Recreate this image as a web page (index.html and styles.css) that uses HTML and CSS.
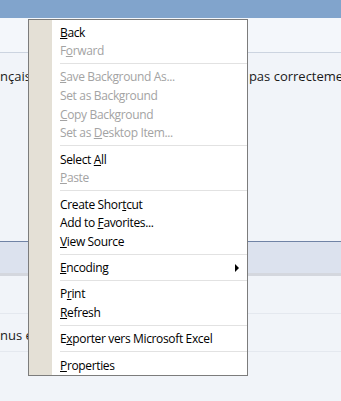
FILE: index.html
```html
<!DOCTYPE html>
<html lang="fr">
<head>
  <meta charset="UTF-8" />
  <meta name="viewport" content="width=device-width, initial-scale=1.0"/>
  <title>Menu contextuel</title>
  <link rel="stylesheet" href="styles.css">
</head>
<body>
  <div class="page">
    <div class="topbar"></div>
    <div class="toolbar"></div>
    <div class="notice">
      <span>nçais</span>
      <span class="notice-end">pas correcteme</span>
    </div>
    <div class="band"></div>
    <div class="list">
      <div class="list-row"></div>
      <div class="list-row"><span>nus e</span></div>
    </div>
  </div>

  <div class="menu">
    <div class="item"><u>B</u>ack</div>
    <div class="item disabled">F<u>o</u>rward</div>
    <div class="sep"></div>
    <div class="item disabled"><u>S</u>ave Background As...</div>
    <div class="item disabled">Set as Back<u>g</u>round</div>
    <div class="item disabled"><u>C</u>opy Background</div>
    <div class="item disabled">Set as <u>D</u>esktop Item...</div>
    <div class="sep"></div>
    <div class="item">Select <u>A</u>ll</div>
    <div class="item disabled"><u>P</u>aste</div>
    <div class="sep"></div>
    <div class="item">Create Shor<u>t</u>cut</div>
    <div class="item">Add to <u>F</u>avorites...</div>
    <div class="item"><u>V</u>iew Source</div>
    <div class="sep"></div>
    <div class="item submenu"><u>E</u>ncoding</div>
    <div class="sep"></div>
    <div class="item">P<u>r</u>int</div>
    <div class="item"><u>R</u>efresh</div>
    <div class="sep"></div>
    <div class="item">E<u>x</u>porter vers Microsoft Excel</div>
    <div class="sep"></div>
    <div class="item"><u>P</u>roperties</div>
  </div>
</body>
</html>
```

FILE: styles.css
```css
body {
  margin: 0;
  background: #f1f4f9;
  font-family: "Open Sans", "Liberation Sans", sans-serif;
  font-size: 12px;
  color: #1a1a1a;
}
.page {
  height: 401px;
  overflow: hidden;
}
.topbar {
  height: 18px;
  background: #81a4cc;
}
.toolbar {
  height: 34px;
  background: #f4f7fb;
  border-bottom: 1px solid #ccd4e0;
}
.notice {
  display: flex;
  height: 36px;
  padding-top: 14px;
  font-size: 13px;
  white-space: nowrap;
  overflow: hidden;
}
.notice-end {
  margin-left: 218px;
}
.band {
  margin-top: 138px;
  height: 31px;
  background: #dce2ee;
  border-top: 1px solid #7083a5;
  border-bottom: 3px solid #d4d7de;
}
.list-row {
  height: 38px;
  border-bottom: 1px solid #e4e8ef;
  font-size: 13px;
  padding-top: 12px;
  box-sizing: border-box;
}
.menu {
  position: absolute;
  left: 28px;
  top: 19px;
  width: 218px;
  padding: 2.5px 0 0.5px;
  border: 1px solid #7c7c7c;
  background: linear-gradient(to right, #e4e0d6 0 23px, #fff 23px);
  font-size: 12px;
  letter-spacing: -0.35px;
}
.item {
  height: 18.67px;
  line-height: 20px;
  padding-left: 31px;
  color: #000;
  white-space: nowrap;
}
.item.disabled {
  color: #a3a3a3;
}
.submenu {
  position: relative;
}
.submenu::after {
  content: "";
  position: absolute;
  right: 8px;
  top: 6px;
  border-left: 4px solid #000;
  border-top: 4px solid transparent;
  border-bottom: 4px solid transparent;
}
.sep {
  height: 7.6px;
  margin-left: 31px;
  background: linear-gradient(#e2e2e2, #e2e2e2) no-repeat 0 50% / 100% 1px;
}
```
